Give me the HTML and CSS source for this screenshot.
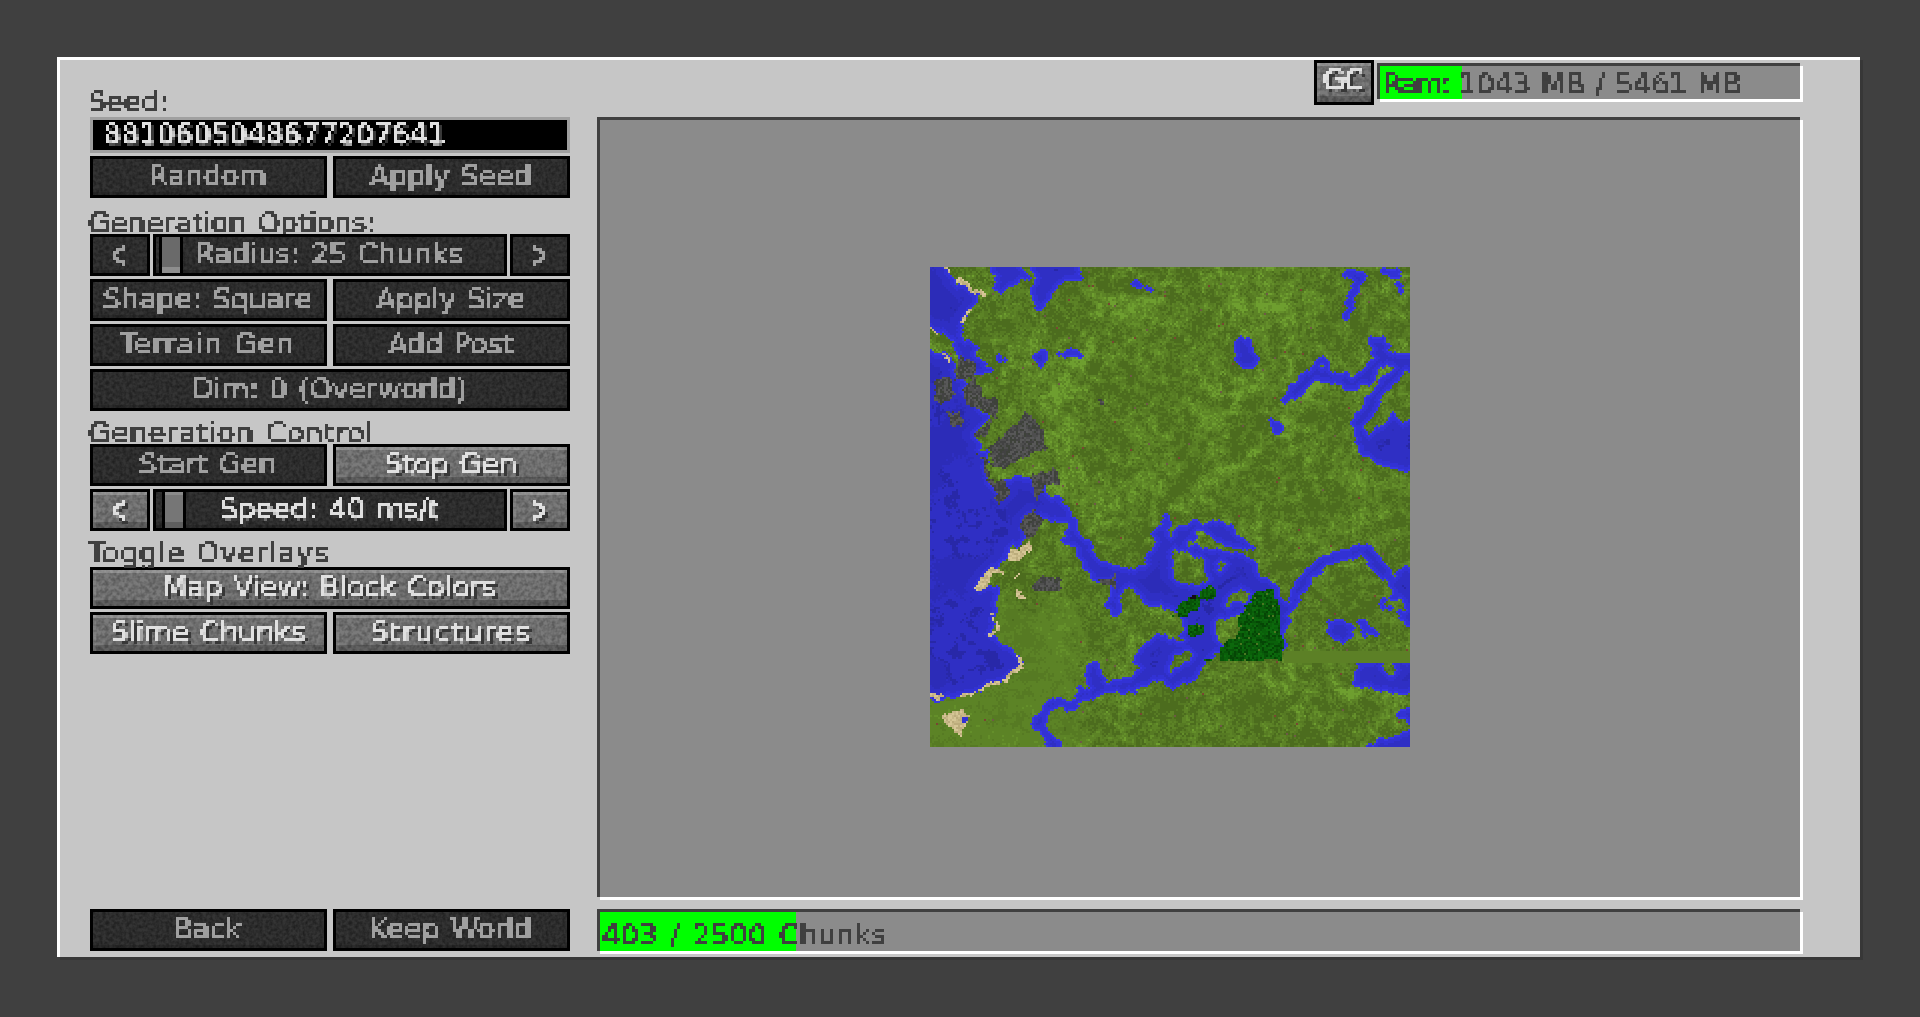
FILE: index.html
```html
<!DOCTYPE html>
<html lang="en">
<head>
<meta charset="utf-8">
<title>Chunk Pregenerator</title>
<link rel="stylesheet" href="styles.css">
</head>
<body>
<svg class="defs" width="0" height="0" aria-hidden="true">
  <filter id="px" x="-10%" y="-20%" width="120%" height="140%" primitiveUnits="userSpaceOnUse" color-interpolation-filters="sRGB">
    <feFlood x="1" y="1" width="1" height="1" flood-color="#000"/>
    <feComposite x="0" y="0" width="3" height="3"/>
    <feTile result="grid"/>
    <feComposite in="SourceGraphic" in2="grid" operator="in"/>
    <feComponentTransfer><feFuncA type="discrete" tableValues="0 0 1 1 1"/></feComponentTransfer>
    <feMorphology operator="dilate" radius="1"/>
  </filter>
</svg>
<main class="panel">
  <section class="side">
    <div class="label first"><span class="px">Seed:</span></div>
    <div class="seed"><span class="px">8810605048677207641</span></div>
    <div class="row">
      <button class="btn off"><span class="px">Random</span></button>
      <button class="btn off"><span class="px">Apply Seed</span></button>
    </div>
    <div class="label gen"><span class="px">Generation Options:</span></div>
    <div class="slider-row">
      <button class="btn off"><span class="px"><b class="arrow">&lt;</b></span></button>
      <div class="slider off"><i class="thumb thumb-radius"></i><span class="px">Radius: 25 Chunks</span></div>
      <button class="btn off"><span class="px"><b class="arrow">&gt;</b></span></button>
    </div>
    <div class="row">
      <button class="btn off"><span class="px">Shape: Square</span></button>
      <button class="btn off"><span class="px">Apply Size</span></button>
    </div>
    <div class="row">
      <button class="btn off"><span class="px wide">Terrain Gen</span></button>
      <button class="btn off"><span class="px">Add Post</span></button>
    </div>
    <div class="row">
      <button class="btn off"><span class="px">Dim: 0 (Overworld)</span></button>
    </div>
    <div class="label ctl"><span class="px">Generation Control</span></div>
    <div class="row">
      <button class="btn off"><span class="px">Start Gen</span></button>
      <button class="btn on"><span class="px">Stop Gen</span></button>
    </div>
    <div class="slider-row">
      <button class="btn on"><span class="px"><b class="arrow">&lt;</b></span></button>
      <div class="slider off lit"><i class="thumb thumb-speed"></i><span class="px">Speed: 40 ms/t</span></div>
      <button class="btn on"><span class="px"><b class="arrow">&gt;</b></span></button>
    </div>
    <div class="label tog"><span class="px">Toggle Overlays</span></div>
    <div class="row">
      <button class="btn on"><span class="px">Map View: Block Colors</span></button>
    </div>
    <div class="row">
      <button class="btn on"><span class="px">Slime Chunks</span></button>
      <button class="btn on"><span class="px wider">Structures</span></button>
    </div>
    <div class="row bottom">
      <button class="btn off"><span class="px">Back</span></button>
      <button class="btn off"><span class="px">Keep World</span></button>
    </div>
  </section>
  <section class="main">
    <div class="top">
      <button class="btn on gc"><span class="px">GC</span></button>
      <div class="bar ram">
        <div class="fill" style="width:19.3%"></div>
        <span class="px"><span class="tight">Ram:</span> 1043 MB / 5461 MB</span>
      </div>
    </div>
    <div class="view"><canvas id="map" width="240" height="240"></canvas></div>
    <div class="bar progress">
      <div class="fill" style="width:16.25%"></div>
      <span class="px">403 / 2500 Chunks</span>
    </div>
  </section>
</main>
<script src="map.js"></script>
</body>
</html>
```
FILE: styles.css
```css
* { box-sizing: border-box; }
html, body { margin: 0; height: 100%; }
body {
  background: #404040;
  padding: 57px 0 0 57px;
  font-family: "DejaVu Sans", sans-serif;
  font-size: 29px;
  letter-spacing: -0.35px;
  word-spacing: 2px;
  overflow: hidden;
}
.defs { position: absolute; }
.px {
  display: inline-block;
  line-height: 30px;
  white-space: nowrap;
  -webkit-text-stroke: 0.5px currentColor;
  filter: url(#px);
}
.wide { letter-spacing: 0.6px; }
.wider { letter-spacing: 1.1px; }
.tight { letter-spacing: -2.6px; }
.arrow {
  display: inline-block;
  font-weight: normal;
  transform: scale(0.72, 1.45);
}
.panel {
  width: 1803px;
  height: 900px;
  display: flex;
  gap: 27px;
  padding-left: 30px;
  background: #c6c6c6;
  border-top: 3px solid #fff;
  border-left: 3px solid #fff;
  box-shadow: 3px 3px 0 #373737;
}
.side {
  width: 480px;
  display: flex;
  flex-direction: column;
  gap: 3px;
  padding-bottom: 6px;
}
.label { color: #404040; height: 28px; }
.label .px { margin: -3px 0 0 -2px; }
.label.first { height: 29px; margin-top: 25px; }
.label.first .px { margin-top: -1px; }
.label.gen { margin-top: 5px; height: 25px; }
.label.ctl { margin-top: 2px; height: 25px; letter-spacing: 0.45px; }
.label.tog { margin-top: 2px; height: 28px; letter-spacing: 0.6px; }
.seed {
  height: 36px;
  background: #000;
  border: 3px solid #a0a0a0;
  color: #e0e0e0;
  padding: 0 0 0 10px;
  letter-spacing: -0.42px;
  text-shadow: 3px 3px 0 #383838;
  display: flex;
  align-items: flex-start;
}
.seed .px { margin-top: -1px; }
.row { display: flex; gap: 6px; }
.row.bottom { margin-top: auto; }
.slider-row { display: flex; gap: 3px; }
.btn, .slider {
  height: 42px;
  border: 3px solid #000;
  padding: 0 2px 2px 0;
  font: inherit;
  letter-spacing: inherit;
  word-spacing: inherit;
  display: flex;
  align-items: center;
  justify-content: center;
  flex: 1 1 0;
  min-width: 0;
}
.slider-row .btn { flex: 0 0 60px; }
.slider { flex: 0 0 354px; position: relative; }
.off {
  color: #a0a0a0;
  background: url("data:image/svg+xml,%3Csvg xmlns='http://www.w3.org/2000/svg' width='480' height='48'%3E%3Cfilter id='n'%3E%3CfeTurbulence type='fractalNoise' baseFrequency='.3' numOctaves='2' seed='4'/%3E%3CfeColorMatrix values='0 0 0 0 0 0 0 0 0 0 0 0 0 0 0 .8 0 0 0 -.25'/%3E%3C/filter%3E%3Crect width='480' height='48' filter='url(%23n)'/%3E%3C/svg%3E"), #343434;
  box-shadow: inset 0 -3px 0 rgba(0, 0, 0, .15);
}
.on {
  color: #e0e0e0;
  text-shadow: 3px 3px 0 #383838;
  background: url("data:image/svg+xml,%3Csvg xmlns='http://www.w3.org/2000/svg' width='480' height='48'%3E%3Cfilter id='n'%3E%3CfeTurbulence type='fractalNoise' baseFrequency='.25' numOctaves='2' seed='9'/%3E%3CfeColorMatrix values='0 0 0 0 0 0 0 0 0 0 0 0 0 0 0 .6 0 0 0 -.2'/%3E%3C/filter%3E%3Crect width='480' height='48' filter='url(%23n)'/%3E%3C/svg%3E"), #7a7a7a;
  box-shadow: inset 0 3px 0 rgba(255, 255, 255, .22), inset 3px 0 0 rgba(255, 255, 255, .08), inset 0 -6px 0 rgba(0, 0, 0, .2);
}
.lit { color: #e0e0e0; text-shadow: 3px 3px 0 #383838; }
.thumb {
  position: absolute;
  top: 0;
  bottom: 0;
  width: 24px;
  border: solid #000;
  border-width: 0 3px;
  background: linear-gradient(#8a8a8a 3px, #767676 3px, #767676 30px, #5e5e5e 30px);
}
.thumb-radius { left: 3px; background: linear-gradient(#6a6a6a 30px, #8e8e8e 30px); }
.thumb-speed { left: 6px; }
.slider .px { position: relative; }
.main {
  width: 1206px;
  display: flex;
  flex-direction: column;
}
.top {
  height: 57px;
  display: flex;
  justify-content: flex-end;
  gap: 3px;
  color: #404040;
}
.gc { flex: 0 0 60px; height: 45px; padding: 0 2px 6px 0; letter-spacing: -1px; }
.bar {
  position: relative;
  background:
    linear-gradient(#8b8b8b, #8b8b8b) 3px 3px / calc(100% - 6px) calc(100% - 6px) no-repeat,
    linear-gradient(#404040, #404040) 0 0 / calc(100% - 3px) calc(100% - 3px) no-repeat,
    linear-gradient(#fff, #fff) 3px 3px / calc(100% - 3px) calc(100% - 3px) no-repeat;
  color: #404040;
}
.fill {
  position: absolute;
  left: 3px;
  top: 3px;
  bottom: 3px;
  background: #0f0;
}
.bar .px { position: relative; }
.ram { width: 426px; height: 39px; margin-top: 3px; padding: 4px 0 0 6px; letter-spacing: -0.55px; }
.view {
  height: 783px;
  padding: 150px 0 0 333px;
  background:
    linear-gradient(#8b8b8b, #8b8b8b) 3px 3px / calc(100% - 6px) calc(100% - 6px) no-repeat,
    linear-gradient(#404040, #404040) 0 0 / calc(100% - 3px) calc(100% - 3px) no-repeat,
    linear-gradient(#fff, #fff) 3px 3px / calc(100% - 3px) calc(100% - 3px) no-repeat;
}
#map { display: block; width: 480px; height: 480px; image-rendering: pixelated; }
.progress { height: 45px; margin-top: 9px; padding: 9px 0 0 5px; letter-spacing: 0; word-spacing: 3.5px; }
```
FILE: map.js
```js
(function () {
  var N = 240;
  function U(p) { return (p - 30) / 6; }
  function V(p) { return (p - 21) / 6; }
  function layer() {
    var c = document.createElement('canvas');
    c.width = c.height = N;
    return c.getContext('2d');
  }
  function poly(g, pts) {
    g.beginPath();
    for (var i = 0; i < pts.length; i += 2) {
      g[i ? 'lineTo' : 'moveTo'](U(pts[i]), V(pts[i + 1]));
    }
    g.closePath();
    g.fill();
  }
  function line(g, w, pts) {
    g.lineWidth = w / 6;
    g.lineJoin = g.lineCap = 'round';
    g.beginPath();
    for (var i = 0; i < pts.length; i += 2) {
      g[i ? 'lineTo' : 'moveTo'](U(pts[i]), V(pts[i + 1]));
    }
    g.stroke();
  }
  function disc(g, x, y, r) {
    g.beginPath();
    g.arc(U(x), V(y), r / 6, 0, 7);
    g.fill();
  }

  var seed = 1337;
  function rnd() {
    seed = (seed * 1664525 + 1013904223) >>> 0;
    return seed / 4294967296;
  }
  var G = 256, table = new Float32Array(G * G);
  for (var t = 0; t < table.length; t++) table[t] = rnd();
  function vn(x, y) {
    var xi = Math.floor(x), yi = Math.floor(y), fx = x - xi, fy = y - yi;
    fx = fx * fx * (3 - 2 * fx); fy = fy * fy * (3 - 2 * fy);
    function at(a, b) { return table[((a & 255) + (b & 255) * G)]; }
    var a = at(xi, yi), b = at(xi + 1, yi), c = at(xi, yi + 1), d = at(xi + 1, yi + 1);
    return a + (b - a) * fx + (c - a) * fy + (a - b - c + d) * fx * fy;
  }
  function fbm(x, y) {
    return vn(x, y) * .5 + vn(x * 2.1 + 9, y * 2.1 + 4) * .3 + vn(x * 4.3 + 3, y * 4.3 + 7) * .2;
  }
  function clamp(a) { return Math.max(0, Math.min(1, a)); }

  var w = layer();
  w.fillStyle = w.strokeStyle = '#000';
  var water = [
    [30,21, 62,21, 85,40, 125,85, 170,105, 150,150, 118,190, 130,235, 170,290, 205,330, 170,335, 120,290, 90,230, 30,195],
    [30,285, 70,280, 105,325, 110,350, 140,365, 130,400, 200,470, 160,530, 190,590, 215,680, 240,730, 265,660, 340,660, 385,720, 440,775, 445,810, 375,770, 310,770, 310,830, 260,880, 235,915, 170,985, 235,990, 220,1060, 210,1125, 290,1190, 300,1215, 230,1270, 130,1300, 50,1320, 30,1325],
    [560,1050, 590,960, 650,940, 700,870, 720,790, 745,760, 745,840, 800,790, 935,795, 950,830, 1000,860, 1005,890, 1030,960, 1080,985, 1095,1050, 1090,1180, 900,1170, 830,1210, 760,1270, 670,1240, 650,1190, 700,1130, 790,1140, 790,1060, 680,1020, 620,1040, 585,1065],
    [340,21, 470,21, 485,65, 430,60, 355,155, 340,110, 340,65],
    [205,21, 290,21, 330,40, 270,70, 240,105, 235,65],
    [945,270, 975,240, 1015,290, 1000,320, 950,305],
    [335,285, 375,270, 365,315],
    [405,290, 465,265, 490,280, 460,300],
    [1345,240, 1390,235, 1410,270, 1370,285],
    [1340,540, 1420,470, 1470,500, 1470,620, 1390,605],
    [1400,1020, 1470,925, 1470,1100, 1430,1060, 1375,1030],
    [1235,1085, 1265,1080, 1295,1105, 1275,1150, 1240,1130],
    [1310,1085, 1340,1085, 1370,1135, 1340,1125],
    [1320,1205, 1470,1205, 1470,1295, 1380,1290, 1305,1260],
    [635,1130, 660,1095, 680,1130],
    [1340,1461, 1400,1440, 1470,1410, 1470,1461],
    [1420,1365, 1470,1340, 1470,1385],
    [505,1210, 535,1210, 540,1260, 505,1270],
    [1060,480, 1080,500, 1070,515, 1055,500],
    [1085,1180, 1130,990, 1190,920, 1150,1000, 1100,1080]
  ];
  water.forEach(function (p) { poly(w, p); });
  [
    [32, [385,720, 450,790, 450,840, 490,850, 500,900, 530,940, 600,940, 650,950]],
    [30, [480,1310, 560,1275, 640,1280, 680,1240, 760,1265, 810,1240, 830,1210]],
    [24, [1090,1060, 1130,990, 1190,920, 1260,890, 1330,870, 1390,930, 1420,970, 1470,930]],
    [14, [480,1310, 480,1290]],
    [20, [450,1330, 380,1340, 355,1390, 365,1420, 405,1460]],
    [14, [1275,45, 1330,50, 1290,100, 1285,170]],
    [28, [1115,410, 1150,365, 1215,340, 1300,375, 1340,350, 1390,295, 1470,310]],
    [30, [1470,310, 1380,380, 1350,440, 1315,480, 1335,560, 1390,600, 1470,610]],
    [10, [1205,300, 1185,320, 1205,340, 1225,320, 1205,300]],
    [8, [645,55, 690,90]],
    [8, [1380,35, 1430,40]],
    [8, [240,295, 260,300]],
    [8, [1440,80, 1450,90]]
  ].forEach(function (r) { line(w, r[0], r[1]); });
  w.globalCompositeOperation = 'destination-out';
  [
    [745,870, 800,865, 860,900, 870,970, 760,985],
    [815,840, 850,805, 880,840, 960,855, 1000,865, 1035,890, 1030,950, 1000,910, 960,890, 880,870, 800,858],
    [885,905, 920,900, 915,940, 890,940],
    [900,1050, 930,990, 1000,990, 990,1020, 945,1030],
    [885,1090, 950,1050, 1010,1060, 960,1170, 890,1160],
    [590,1030, 620,975, 680,1020, 790,1100, 790,1145, 700,1130, 650,1190, 690,1220, 740,1240, 760,1180, 830,1170, 820,1200, 750,1250, 700,1220, 640,1180, 600,1070],
    [170,985, 210,915, 250,930, 250,970, 205,995],
    [1375,1205, 1420,1205, 1420,1240, 1385,1230],
    [1335,490, 1400,390, 1470,350, 1470,470, 1420,470, 1340,535],
    [1385,1030, 1450,995, 1460,1060, 1420,1050],
    [1100,1040, 1075,985, 1100,980, 1110,1040],
    [310,770, 375,770, 440,790, 450,840, 400,860, 320,830]
  ].forEach(function (p) { poly(w, p); });

  var r = layer();
  r.fillStyle = '#000';
  [
    [105,310, 130,285, 170,320, 170,365, 115,350],
    [40,370, 95,350, 105,400, 70,440, 40,420],
    [130,405, 155,360, 195,410, 230,420, 230,475, 190,450, 130,435],
    [85,460, 125,450, 135,500, 90,500],
    [200,570, 280,495, 320,455, 375,515, 385,570, 300,590, 250,630, 210,610],
    [155,535, 215,475, 195,525],
    [170,570, 205,620, 215,670, 190,620],
    [335,640, 415,625, 420,670, 370,675, 355,720],
    [210,650, 260,665, 270,700, 235,735],
    [290,790, 340,755, 375,790, 330,835],
    [345,960, 415,945, 420,990, 345,995],
    [520,950, 595,950, 595,990, 560,975],
    [535,420, 550,420, 550,435, 535,435]
  ].forEach(function (p) { poly(r, p); });

  var s = layer();
  s.fillStyle = s.strokeStyle = '#000';
  poly(s, [70,1370, 130,1345, 155,1375, 125,1425, 75,1390]);
  poly(s, [165,985, 210,915, 250,935, 215,950, 205,995]);
  poly(s, [260,885, 330,840, 335,870, 290,905, 265,905]);
  [
    [12, [115,60, 170,100, 195,105]],
    [10, [150,150, 120,185]],
    [8, [30,200, 50,215]],
    [8, [70,280, 90,310]],
    [12, [285,1000, 305,1015]],
    [10, [215,1060, 235,1100, 215,1125]],
    [10, [290,1190, 300,1215, 250,1265, 130,1305]],
    [10, [35,1312, 75,1308]],
    [6, [280,950, 300,940]],
    [6, [60,25, 80,35]]
  ].forEach(function (l) { line(s, l[0], l[1]); });

  var f = layer();
  f.fillStyle = '#000';
  poly(f, [1010,995, 1060,988, 1088,1060, 1090,1202, 900,1200, 900,1160, 950,1120, 958,1060, 990,1020]);
  poly(f, [845,1188, 880,1188, 880,1200, 845,1200]);
  disc(f, 865, 1000, 24);
  disc(f, 825,1030, 22);
  disc(f, 790,1047, 26);
  disc(f, 828,1110, 24);
  disc(f, 755,1070, 8);

  var light = layer();
  light.filter = 'blur(2px)';
  light.strokeStyle = '#000';
  [
    [30, [380,450, 450,350, 520,250]],
    [26, [385,700, 470,630]],
    [34, [780,735, 900,630, 1060,530, 1120,430, 1200,360]],
    [30, [1240,1300, 1470,1260]],
    [24, [500,100, 720,120]],
    [26, [890,1100, 960,1060]],
    [24, [1180,960, 1300,900]],
    [30, [940,140, 1100,130]],
    [22, [600,160, 720,80]]
  ].forEach(function (l) { line(light, l[0], l[1]); });

  var dark = layer();
  dark.filter = 'blur(2px)';
  dark.strokeStyle = '#000';
  [
    [26, [720,740, 850,640, 1050,510, 1000,420]],
    [26, [980,1340, 1040,1360]],
    [20, [350,420, 330,500]],
    [22, [540,90, 720,90]],
    [26, [1130,470, 1250,480]],
    [20, [1160,700, 1200,760]]
  ].forEach(function (l) { line(dark, l[0], l[1]); });

  function alpha(g) {
    var d = g.getImageData(0, 0, N, N).data, o = new Uint8Array(N * N);
    for (var i = 0; i < N * N; i++) o[i] = d[i * 4 + 3];
    return o;
  }
  var WA = alpha(w), RA = alpha(r), SA = alpha(s), FA = alpha(f), LA = alpha(light), DA = alpha(dark);
  function warp(src, x, y, amp) {
    var dx = (vn(x / 4 + 31, y / 4) - .5) * amp + (vn(x / 1.7, y / 1.7 + 50) - .5) * amp * .5;
    var dy = (vn(x / 4, y / 4 + 77) - .5) * amp + (vn(x / 1.7 + 90, y / 1.7) - .5) * amp * .5;
    var sx = Math.max(0, Math.min(N - 1, Math.round(x + dx)));
    var sy = Math.max(0, Math.min(N - 1, Math.round(y + dy)));
    return src[sx + sy * N] > 127;
  }

  var raw = new Uint8Array(N * N), isW = new Uint8Array(N * N), dist = new Float32Array(N * N), x, y, i;
  for (y = 0; y < N; y++) for (x = 0; x < N; x++) {
    raw[x + y * N] = warp(WA, x, y, 3.5) ? 1 : 0;
  }
  for (y = 0; y < N; y++) for (x = 0; x < N; x++) {
    i = x + y * N;
    isW[i] = raw[i] || (x && raw[i - 1]) || (x < N - 1 && raw[i + 1]) || (y && raw[i - N]) || (y < N - 1 && raw[i + N]) ? 1 : 0;
    dist[i] = isW[i] ? 1e4 : 0;
  }
  for (y = 0; y < N; y++) for (x = 0; x < N; x++) {
    i = x + y * N;
    if (x) dist[i] = Math.min(dist[i], dist[i - 1] + 1);
    if (y) dist[i] = Math.min(dist[i], dist[i - N] + 1);
  }
  for (y = N - 1; y >= 0; y--) for (x = N - 1; x >= 0; x--) {
    i = x + y * N;
    if (x < N - 1) dist[i] = Math.min(dist[i], dist[i + 1] + 1);
    if (y < N - 1) dist[i] = Math.min(dist[i], dist[i + N] + 1);
  }

  var ctx = document.getElementById('map').getContext('2d');
  var img = ctx.createImageData(N, N), out = img.data;
  var GR = [[76,108,30],[86,122,35],[92,131,38],[100,143,42],[110,158,47]];
  var WT = [[40,40,168],[44,44,184],[47,47,196],[50,50,212],[56,56,228]];
  var RK = [[66,66,66],[78,78,78],[88,88,88],[62,66,58]];
  var SD = [[200,184,136],[214,198,150],[188,172,124]];
  var FR = [[8,84,8],[10,96,10],[12,104,12],[5,70,5]];
  for (y = 0; y < N; y++) for (x = 0; x < N; x++) {
    i = x + y * N;
    var col, px = x * 6 + 30, py = y * 6 + 21, n = rnd();
    var big = fbm(x / 22, y / 22), fine = fbm(x / 4, y / 4);
    var pond = Math.hypot(px - 130, py - 1375) < 10;
    if (FA[i] > 60 && warp(FA, x, y, 3)) {
      col = n < .025 ? [76,120,34] : FR[Math.floor(rnd() * 4)];
      if (px > 805 && px < 825 && py > 1000 && py < 1016) col = [20,12,24];
    } else if (py >= 1172 && py < 1205 && px >= 1088) {
      col = [92,128,38];
    } else if (pond) {
      col = WT[3];
    } else if (warp(RA, x, y, 3)) {
      col = RK[Math.floor(rnd() * 4)];
    } else if (warp(SA, x, y, 2.5)) {
      col = SD[Math.floor(rnd() * 3)];
    } else if (isW[i]) {
      var d = dist[i];
      var level = d <= 1 ? 4 : d <= 3 ? 3 : d <= 7 ? 2 : (big + (n - .5) * .12 > .5 ? 1 : (fine > .62 ? 0 : 2));
      col = WT[level];
    } else {
      var rough = big * .35 + fine * .95 + (n - .5) * .36 + .08;
      var calm = big * .2 + fine * .25 + .6 + (n - .5) * .1;
      var k = clamp((560 - px) / 160) * clamp((py - 960) / 120);
      var v = rough * (1 - k) + calm * k + LA[i] / 255 * .3 - DA[i] / 255 * .26;
      var q = v < .66 ? 0 : v < .8 ? 1 : v < .94 ? 2 : v < 1.06 ? 3 : 4;
      col = GR[q];
      if (rnd() < .003) col = rnd() < .5 ? [110,90,70] : [120,70,50];
    }
    out[i * 4] = col[0]; out[i * 4 + 1] = col[1]; out[i * 4 + 2] = col[2]; out[i * 4 + 3] = 255;
  }
  ctx.putImageData(img, 0, 0);
})();
```
